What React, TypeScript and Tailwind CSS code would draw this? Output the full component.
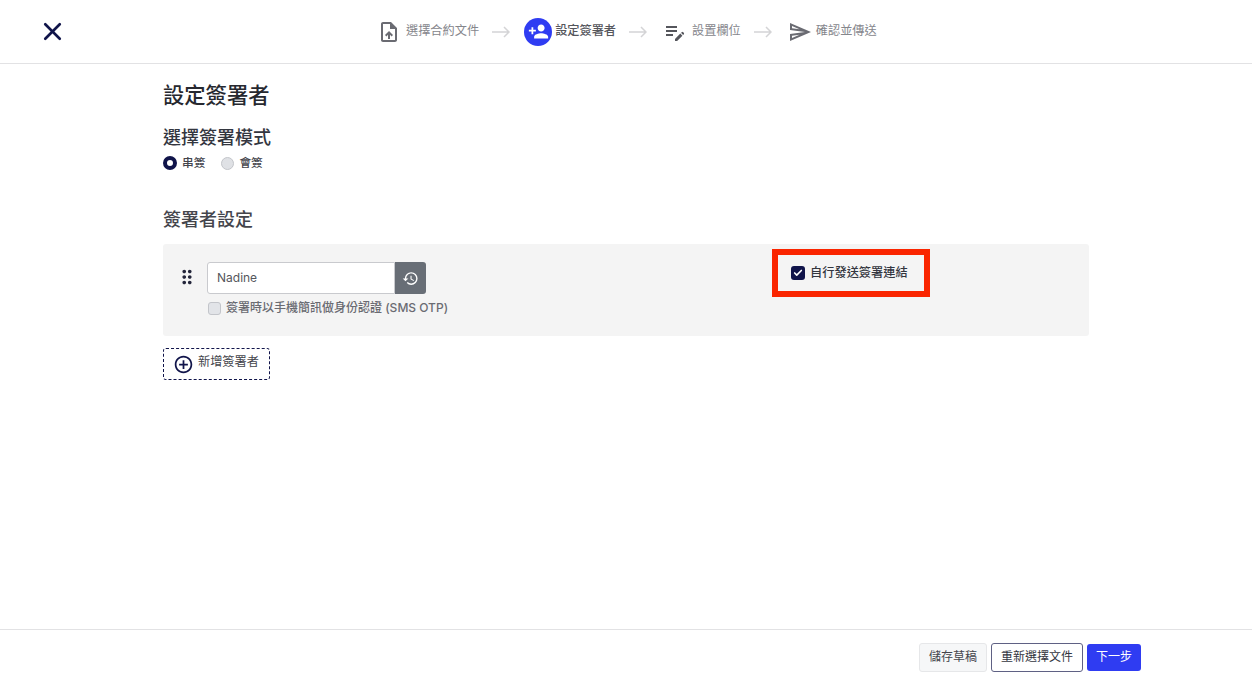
import React from 'react';
import { Check, X } from 'lucide-react';
import {
  MdAddCircleOutline,
  MdDragIndicator,
  MdEditNote,
  MdOutlineSend,
  MdOutlineUploadFile,
  MdPersonAddAlt1,
  MdHistory,
} from 'react-icons/md';

const fontStack = "font-['Inter','Noto_Sans_CJK_TC',sans-serif]";

const StepArrow = () => (
  <svg width="18" height="12" viewBox="0 0 18 12" fill="none" stroke="#d4d4d6" strokeWidth="1.5" className="ml-[13px]">
    <path d="M0 6H17M12 1l5 5-5 5" />
  </svg>
);

export default function App() {
  return (
    <div className={`${fontStack} flex h-screen flex-col bg-white text-[#33363f]`}>
      {/* Top bar with steps */}
      <header className="flex h-[64px] shrink-0 items-center border-b border-[#e2e2e4] pl-[38px]">
        <X size={29} strokeWidth={2.2} className="text-[#10144a]" />
        <div className="ml-[313px] flex items-center text-[12.2px] text-[#85868c]">
          <MdOutlineUploadFile size={24} className="ml-[-3px] text-[#6a6b72]" />
          <span className="ml-[5px]">選擇合約文件</span>
          <StepArrow />
          <span className="ml-[14px] flex h-[28px] w-[28px] items-center justify-center rounded-full bg-[#2f3cf2] text-white">
            <MdPersonAddAlt1 size={21} className="-scale-x-100" />
          </span>
          <span className="ml-[3px] font-medium text-[#55565c]">設定簽署者</span>
          <StepArrow />
          <MdEditNote size={24} className="ml-[16px] text-[#55565c]" />
          <span className="ml-[5px]">設置欄位</span>
          <StepArrow />
          <MdOutlineSend size={24} className="ml-[16px] text-[#6a6b72]" />
          <span className="ml-[4px]">確認並傳送</span>
        </div>
      </header>

      {/* Main content */}
      <main className="flex-1 pl-[163px] pr-[163px]">
        <h1 className="mt-[15px] text-[21.3px] leading-[32px] font-medium text-[#26282f]">設定簽署者</h1>
        <h2 className="mt-[13px] text-[18px] leading-[27px] font-medium text-[#33363f]">選擇簽署模式</h2>
        <div className="mt-[3px] flex items-center text-[11.7px] font-medium leading-[18px] text-[#44454c]">
          <span className="box-border h-[14px] w-[14px] rounded-full border-[4px] border-[#10144a] bg-white" />
          <span className="ml-[5px]">串簽</span>
          <span className="ml-[16px] box-border h-[13px] w-[13px] rounded-full border border-[#c3c5ca] bg-[#dfe1e5]" />
          <span className="ml-[5px]">會簽</span>
        </div>

        <h2 className="mt-[34px] text-[18px] leading-[27px] font-medium text-[#44454c]">簽署者設定</h2>

        {/* Signer card */}
        <div className="mt-[11px] flex h-[92px] w-[926px] rounded-[3px] bg-[#f4f4f4]">
          <div className="pl-[13px] pt-[22px]">
            <MdDragIndicator size={22} className="text-[#23253a]" />
          </div>
          <div className="ml-[9px] pt-[18px]">
            <div className="flex h-[32px] w-[219px]">
              <div className="flex flex-1 items-center rounded-l-[3px] border border-[#c9cace] bg-white pl-[9px] text-[12px] text-[#55565c]">
                Nadine
              </div>
              <button className="flex w-[31px] items-center justify-center rounded-r-[3px] bg-[#686e76] text-white">
                <MdHistory size={17} />
              </button>
            </div>
            <label className="mt-[6px] flex items-center text-[12px] font-medium leading-[16px] text-[#6a6b72]">
              <span className="ml-[1px] box-border h-[13px] w-[13px] rounded-[3px] border border-[#c3c5ca] bg-[#e2e4e8]" />
              <span className="ml-[5px]">簽署時以手機簡訊做身份認證 (SMS OTP)</span>
            </label>
          </div>
          {/* Highlighted option */}
          <div className="ml-[324px] mt-[5px] flex h-[48px] w-[158px] items-center border-[6px] border-[#fa2500] pl-[13px] text-[12.2px] font-medium text-[#33363f]">
            <span className="flex h-[14px] w-[14px] items-center justify-center rounded-[3px] bg-[#10144a] text-white">
              <Check size={10} strokeWidth={4} />
            </span>
            <span className="ml-[5px]">自行發送簽署連結</span>
          </div>
        </div>

        <button className="mt-[12px] flex h-[32px] w-[107px] items-center rounded-[3px] border border-dashed border-[#10144a] pl-[9px] text-[12.2px] text-[#44454c]">
          <MdAddCircleOutline size={21} className="text-[#10144a]" />
          <span className="ml-[4px] pb-[3px]">新增簽署者</span>
        </button>
      </main>

      {/* Footer actions */}
      <footer className="flex h-[55px] shrink-0 items-center justify-end gap-[4px] border-t border-[#e2e2e4] pr-[111px] text-[12px]">
        <button className="h-[29px] w-[68px] rounded-[3px] border border-[#e6e7e9] bg-[#f6f7f8] text-[#44454c]">儲存草稿</button>
        <button className="h-[29px] w-[92px] rounded-[3px] border-[1.5px] border-[#5f6184] bg-white text-[#33363f]">重新選擇文件</button>
        <button className="h-[27px] w-[54px] rounded-[3px] bg-[#2f3cf2] text-white">下一步</button>
      </footer>
    </div>
  );
}
